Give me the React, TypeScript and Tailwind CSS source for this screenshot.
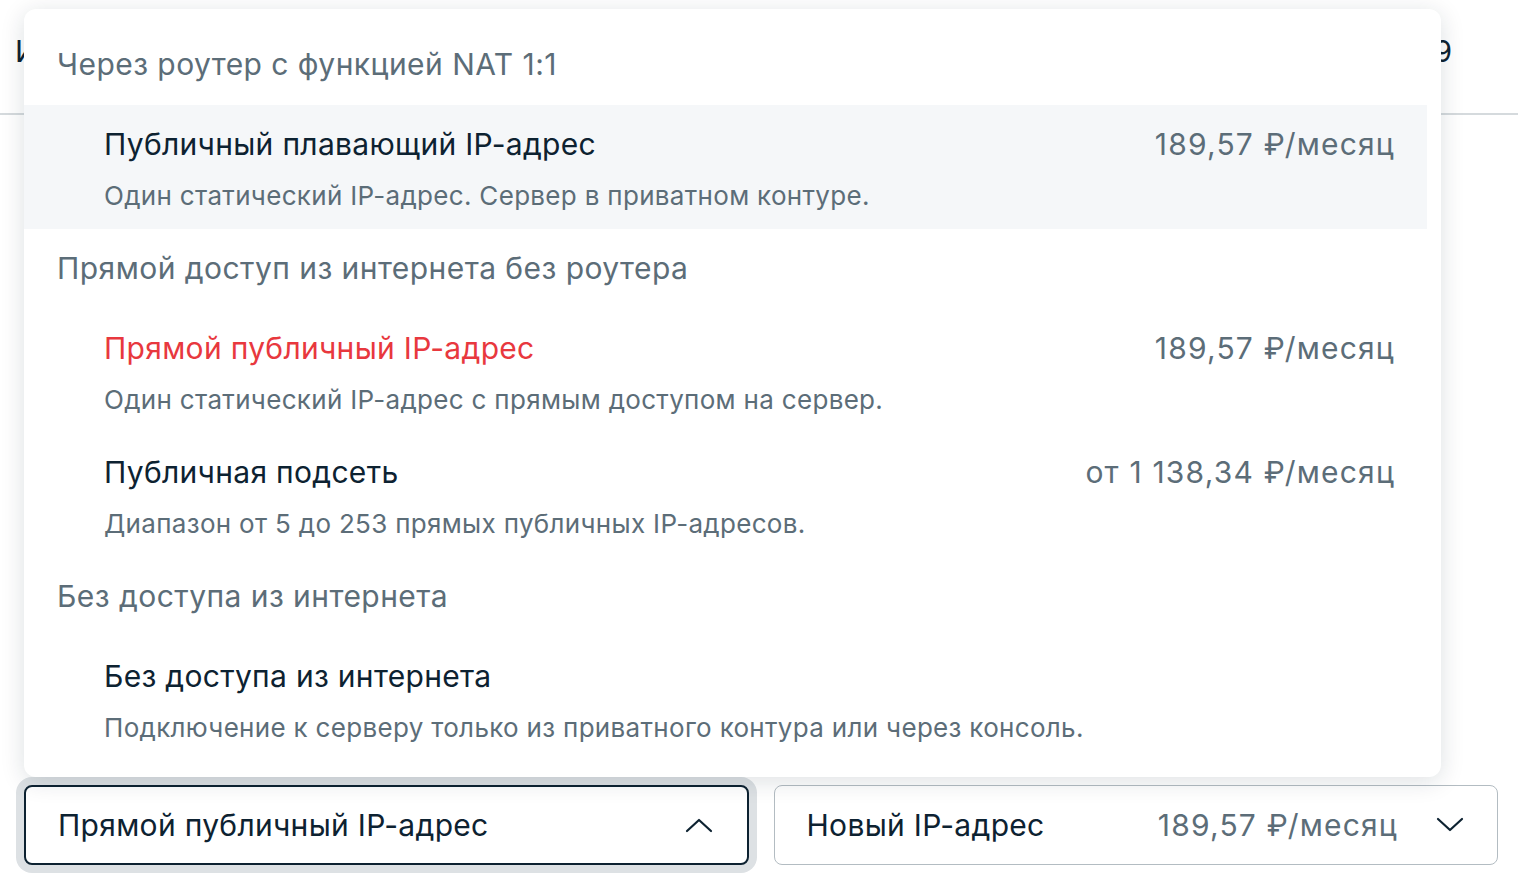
import React from 'react';

type Option = {
  title: string;
  desc: string;
  price?: string;
  active?: boolean;
  selected?: boolean;
};

type Group = {
  label: string;
  options: Option[];
};

const groups: Group[] = [
  {
    label: 'Через роутер с функцией NAT 1:1',
    options: [
      {
        title: 'Публичный плавающий IP-адрес',
        desc: 'Один статический IP-адрес. Сервер в приватном контуре.',
        price: '189,57 ₽/месяц',
        active: true,
      },
    ],
  },
  {
    label: 'Прямой доступ из интернета без роутера',
    options: [
      {
        title: 'Прямой публичный IP-адрес',
        desc: 'Один статический IP-адрес с прямым доступом на сервер.',
        price: '189,57 ₽/месяц',
        selected: true,
      },
      {
        title: 'Публичная подсеть',
        desc: 'Диапазон от 5 до 253 прямых публичных IP-адресов.',
        price: 'от 1 138,34 ₽/месяц',
      },
    ],
  },
  {
    label: 'Без доступа из интернета',
    options: [
      {
        title: 'Без доступа из интернета',
        desc: 'Подключение к серверу только из приватного контура или через консоль.',
      },
    ],
  },
];

const Chevron = ({ up }: { up?: boolean }) => (
  <svg width="28" height="16" viewBox="0 0 28 16" fill="none" className="shrink-0">
    <polyline
      points={up ? '2,14 14,3 26,14' : '2,2 14,13 26,2'}
      stroke="#0d2231"
      strokeWidth="2.2"
      strokeLinecap="round"
      strokeLinejoin="round"
    />
  </svg>
);

const OptionRow = ({ option }: { option: Option }) => (
  <div
    className={`mr-[14px] pl-[80px] pr-[32px] pt-[19px] pb-[17px] ${
      option.active ? 'bg-[#f5f7f9]' : ''
    }`}
  >
    <div className="flex items-center justify-between">
      <span
        className={`text-[30px] leading-[40px] tracking-[0.01em] ${
          option.selected ? 'text-[#e8383e]' : 'text-[#0d2231]'
        }`}
      >
        {option.title}
      </span>
      {option.price && (
        <span className="text-[30px] leading-[40px] tracking-[0.04em] text-[#5c6d78]">
          {option.price}
        </span>
      )}
    </div>
    <div className="mt-[16px] text-[26px] leading-[32px] tracking-[0.012em] text-[#5c6d78]">
      {option.desc}
    </div>
  </div>
);

const Dropdown = () => (
  <div className="absolute left-[24px] top-[9px] w-[1417px] rounded-[12px] bg-white pt-[16px] pb-[16px] shadow-[0_4px_24px_rgba(13,34,49,0.14)]">
    {groups.map((group) => (
      <div key={group.label}>
        <div className="pl-[33px] pt-[19px] pb-[21px] text-[30px] leading-[40px] tracking-[0.015em] text-[#5c6d78]">
          {group.label}
        </div>
        {group.options.map((option) => (
          <OptionRow key={option.title} option={option} />
        ))}
      </div>
    ))}
  </div>
);

export default function App() {
  return (
    <div
      className="relative h-[890px] w-[1518px] overflow-hidden bg-white"
      style={{ fontFamily: 'Inter, "Noto Sans", sans-serif' }}
    >
      {/* page behind the open menu */}
      <div className="flex h-[113px] items-center justify-between pl-[15px] pr-[66px] pb-[10px] text-[30px] text-[#0d2231]">
        <span>И</span>
        <span>9</span>
      </div>
      <div className="h-[2px] bg-[#d5dadd]" />

      <div className="mt-[670px] grid grid-cols-2 gap-[25px] pl-[24px] pr-[20px]">
        <div className="flex h-[80px] items-center justify-between rounded-[8px] border-2 border-[#0d2231] bg-white pl-[32px] pr-[34px] shadow-[0_0_0_8px_#dde1e4]">
          <span className="text-[30px] tracking-[0.01em] text-[#0d2231]">Прямой публичный IP-адрес</span>
          <Chevron up />
        </div>
        <div className="flex h-[80px] items-center rounded-[8px] border border-[#b3bcc2] bg-white pl-[32px] pr-[33px]">
          <span className="flex-1 text-[30px] tracking-[0.01em] text-[#0d2231]">Новый IP-адрес</span>
          <span className="mr-[38px] text-[30px] tracking-[0.04em] text-[#5c6d78]">189,57 ₽/месяц</span>
          <Chevron />
        </div>
      </div>

      <Dropdown />
    </div>
  );
}
